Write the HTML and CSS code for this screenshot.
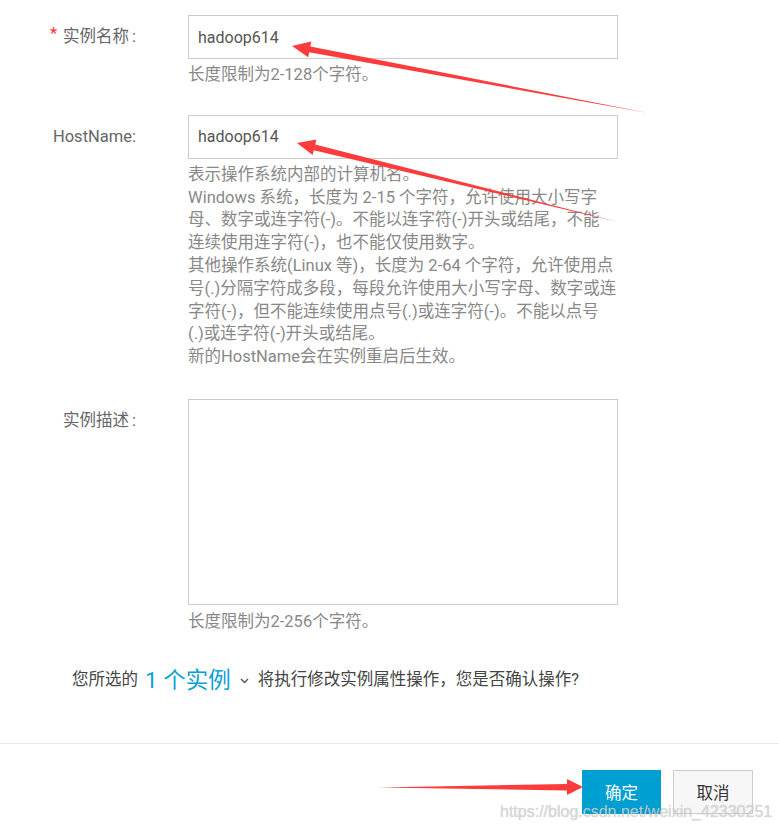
FILE: index.html
```html
<!DOCTYPE html>
<html lang="zh-CN">
<head>
<meta charset="utf-8">
<title>修改实例属性</title>
<link rel="stylesheet" href="styles.css">
</head>
<body>
<div class="page">
  <div class="form">
    <div class="row row-name">
      <div class="label"><span class="req">*</span>实例名称<span class="colon">:</span></div>
      <div class="field">
        <input class="input" type="text" value="hadoop614">
        <p class="hint">长度限制为2-128个字符。</p>
      </div>
    </div>
    <div class="row row-host">
      <div class="label">HostName:</div>
      <div class="field">
        <input class="input" type="text" value="hadoop614">
        <p class="hint">表示操作系统内部的计算机名。<br>Windows 系统，长度为 2-15 个字符，允许使用大小写字<br>母、数字或连字符(-)。不能以连字符(-)开头或结尾，不能<br>连续使用连字符(-)，也不能仅使用数字。<br>其他操作系统(Linux 等)，长度为 2-64 个字符，允许使用点<br>号(.)分隔字符成多段，每段允许使用大小写字母、数字或连<br>字符(-)，但不能连续使用点号(.)或连字符(-)。不能以点号<br>(.)或连字符(-)开头或结尾。<br>新的HostName会在实例重启后生效。</p>
      </div>
    </div>
    <div class="row row-desc">
      <div class="label">实例描述<span class="colon">:</span></div>
      <div class="field">
        <textarea class="textarea"></textarea>
        <p class="hint hint-desc">长度限制为2-256个字符。</p>
      </div>
    </div>
  </div>

  <div class="confirm">您所选的<span class="count">1 个实例</span><svg class="chev" width="9" height="6" viewBox="0 0 9 6"><path d="M1 1 L4.5 4.5 L8 1" fill="none" stroke="#555" stroke-width="1.4"/></svg>将执行修改实例属性操作，您是否确认操作?</div>

  <div class="footer">
    <button class="btn btn-primary" type="button">确定</button>
    <button class="btn btn-default" type="button">取消</button>
  </div>

  <div class="watermark">https://blog.csdn.net/weixin_42330251</div>

  <svg class="arrows" width="779" height="832" viewBox="0 0 779 832">
    <polygon points="648,113 310.3,46.4 311.2,41.5 292,46 308.2,57.2 309.1,52.3" fill="#fc3c3c"/>
    <polygon points="618,222 315.2,144.4 316.4,139.5 297,143 312.6,155.1 313.8,150.2" fill="#fc3c3c"/>
    <polygon points="378,787.5 567,784 567,779 583,787 567,795 567,790.5" fill="#fc3c3c"/>
  </svg>
</div>
</body>
</html>
```

FILE: styles.css
```css
html, body {
  margin: 0;
  padding: 0;
  background: #fff;
}

body {
  font-family: Roboto, "Noto Sans CJK SC", sans-serif;
  font-size: 16.5px;
  color: #666;
}

.page {
  position: relative;
  width: 779px;
  height: 832px;
  overflow: hidden;
}

.form {
  padding-top: 15px;
}

.row {
  display: flex;
  align-items: flex-start;
}

.row-name {
  margin-bottom: 28px;
}

.row-host {
  margin-bottom: 30px;
}

.label {
  width: 136px;
  flex-shrink: 0;
  text-align: right;
  line-height: 44px;
  height: 44px;
  color: #666;
  white-space: nowrap;
}

.colon {
  margin-left: 3px;
}

.req {
  color: #f33;
  margin-right: 6px;
  position: relative;
  top: -3px;
}

.field {
  margin-left: 52px;
  width: 430px;
}

.input,
.textarea {
  display: block;
  box-sizing: border-box;
  width: 430px;
  margin: 0;
  border: 1px solid #ccc;
  border-radius: 0;
  background: #fff;
  font-family: Roboto, "Noto Sans CJK SC", sans-serif;
  font-size: 16px;
  color: #555;
  outline: none;
}

.input {
  height: 44px;
  padding: 0 9px;
}

.textarea {
  height: 206px;
  padding: 8px 9px;
  resize: none;
}

.hint {
  margin: 5px 0 0;
  line-height: 22.8px;
  color: #888;
  white-space: nowrap;
}

.hint-desc {
  margin-top: 6px;
}

.confirm {
  margin-top: 31px;
  padding-left: 72px;
  height: 30px;
  line-height: 30px;
  color: #444;
  white-space: nowrap;
  display: flex;
  align-items: center;
}

.count {
  color: #0aa0d6;
  font-size: 22.5px;
  margin-left: 7px;
}

.chev {
  margin: 2px 9px 0 9px;
}

.footer {
  margin-top: 48px;
  border-top: 1px solid #e6e6e6;
  padding: 26px 26px 0 0;
  display: flex;
  justify-content: flex-end;
  gap: 12px;
}

.btn {
  height: 44px;
  margin: 0;
  border-radius: 0;
  font-family: Roboto, "Noto Sans CJK SC", sans-serif;
  font-size: 16.5px;
  padding: 0;
  cursor: pointer;
}

.btn-primary {
  width: 79px;
  background: #009fd2;
  border: 1px solid #009fd2;
  color: #fff;
}

.btn-default {
  width: 80px;
  background: #f7f7f7;
  border: 1px solid #ccc;
  color: #333;
}

.watermark {
  position: absolute;
  left: 500px;
  top: 803px;
  font-family: "Liberation Sans", Arial, sans-serif;
  font-size: 16px;
  color: rgba(220, 220, 220, 0.8);
  text-shadow: 0 0 1px rgba(120, 120, 120, 0.45);
  white-space: nowrap;
  pointer-events: none;
}

.arrows {
  position: absolute;
  left: 0;
  top: 0;
  pointer-events: none;
}
```
